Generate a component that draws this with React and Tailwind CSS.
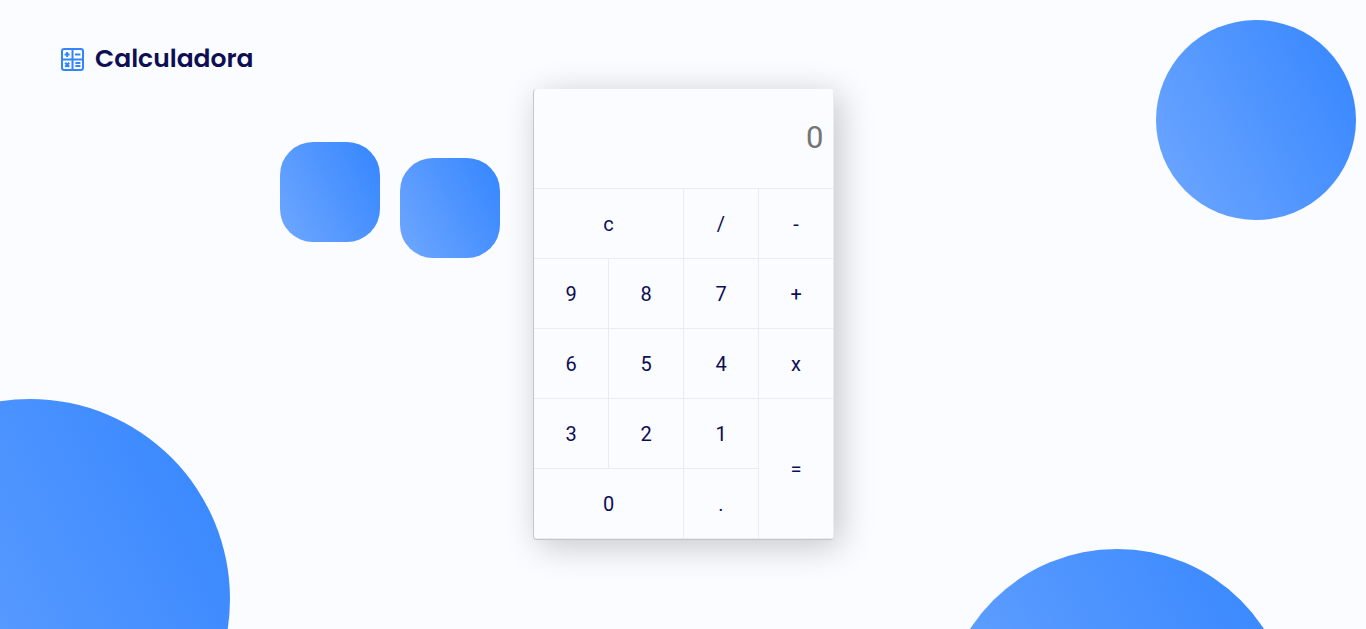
import { useState } from "react";

const keys = [
  { label: "c", span: "col-span-2" },
  { label: "/" },
  { label: "-" },
  { label: "9" },
  { label: "8" },
  { label: "7" },
  { label: "+" },
  { label: "6" },
  { label: "5" },
  { label: "4" },
  { label: "x" },
  { label: "3" },
  { label: "2" },
  { label: "1" },
  { label: "=", span: "row-span-2" },
  { label: "0", span: "col-span-2" },
  { label: "." },
];

function compute(a, op, b) {
  if (op === "+") return a + b;
  if (op === "-") return a - b;
  if (op === "x") return a * b;
  if (op === "/") return a / b;
  return b;
}

function LogoIcon() {
  return (
    <svg viewBox="0 0 24 24" className="size-6" fill="none" stroke="#3385ff" strokeWidth="2" aria-hidden="true">
      <rect x="2" y="2" width="21" height="21" rx="2.2" />
      <path d="M12.5 2v21M2 12.5h21" />
      <path d="M4.6 7.4h5M7.1 4.9v5M15 7.4h5.4M15.4 16h5M15.4 18.9h5M5.2 15.7l4 4M9.2 15.7l-4 4" />
    </svg>
  );
}

function Shapes() {
  const fill = "absolute bg-[linear-gradient(62deg,#6fa7ff_0%,#3a89ff_90%)]";
  return (
    <div className="pointer-events-none absolute inset-0 overflow-hidden" aria-hidden="true">
      <div className={`${fill} right-[10px] top-5 size-[200px] rounded-full`} />
      <div className={`${fill} left-[280px] top-[142px] size-[100px] rounded-[33px]`} />
      <div className={`${fill} left-[400px] top-[158px] size-[100px] rounded-[33px]`} />
      <div className={`${fill} -bottom-[170px] -left-[170px] size-[400px] rounded-full`} />
      <div className={`${fill} -bottom-[270px] right-[74px] size-[350px] rounded-full`} />
    </div>
  );
}

export default function App() {
  const [value, setValue] = useState("");
  const [pending, setPending] = useState(null);
  const [fresh, setFresh] = useState(false);

  function press(key) {
    if (key === "c") {
      setValue("");
      setPending(null);
      setFresh(false);
    } else if (/[0-9.]/.test(key)) {
      if (key === "." && !fresh && value.includes(".")) return;
      setValue(fresh ? key : value + key);
      setFresh(false);
    } else {
      const current = Number(value || 0);
      const result = pending ? compute(pending.left, pending.op, current) : current;
      setValue(String(result));
      setPending(key === "=" ? null : { left: result, op: key });
      setFresh(true);
    }
  }

  return (
    <div className="relative grid min-h-screen bg-[#fbfcff] font-[Heebo,Roboto,sans-serif] text-[#0e0e55]">
      <Shapes />
      <header className="relative col-start-1 row-start-1 flex items-center gap-[11px] self-start px-[60px] py-[41px]">
        <LogoIcon />
        <h1 className="font-[Poppins,Inter,sans-serif] text-[25px] font-semibold leading-9">Calculadora</h1>
      </header>
      <main className="relative col-start-1 row-start-1 place-self-center overflow-hidden rounded border-b border-l border-[#c4c5ca] bg-[#fbfcff] shadow-[6px_6px_34px_rgba(0,0,0,0.22)]">
        <input
          aria-label="Resultado"
          readOnly
          placeholder="0"
          value={value}
          className="block h-[100px] w-[300px] border-b border-r border-[#ebecf2] px-[9px] text-right text-[31px] font-[370] outline-none placeholder:text-[#757575]"
        />
        <div className="grid auto-rows-[70px] grid-cols-[repeat(4,75px)]">
          {keys.map(({ label, span = "" }) => (
            <button
              key={label}
              type="button"
              onClick={() => press(label)}
              className={`${span} cursor-pointer border-b border-r border-[#ebecf2] pl-px pt-[3px] text-xl font-[370] hover:bg-[#f1f4fc]`}
            >
              {label}
            </button>
          ))}
        </div>
      </main>
    </div>
  );
}
